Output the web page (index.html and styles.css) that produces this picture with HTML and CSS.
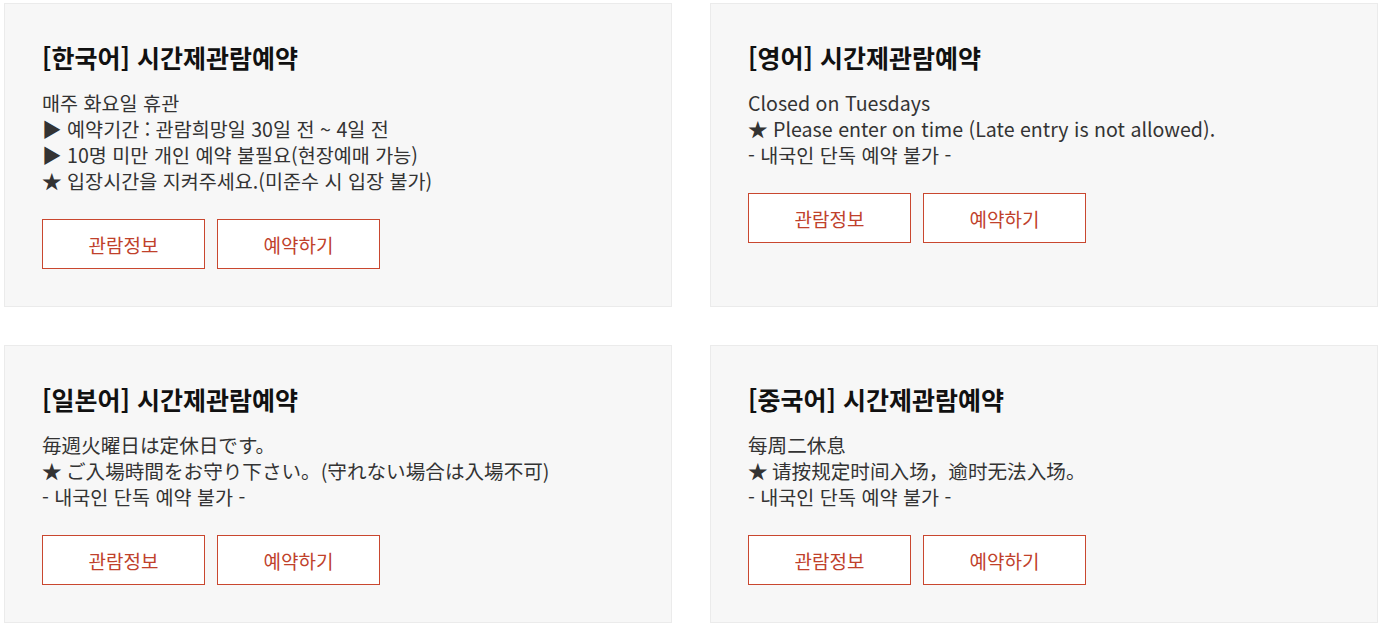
FILE: index.html
```html
<!DOCTYPE html>
<html lang="ko">
<head>
<meta charset="utf-8">
<title>시간제관람예약</title>
<link rel="stylesheet" href="styles.css">
</head>
<body>
<div class="grid">
  <section class="card">
    <h2 class="title">[한국어] 시간제관람예약</h2>
    <div class="desc">
      <p>매주 화요일 휴관</p>
      <p>▶ 예약기간 : 관람희망일 30일 전 ~ 4일 전</p>
      <p>▶ 10명 미만 개인 예약 불필요(현장예매 가능)</p>
      <p>★ 입장시간을 지켜주세요.(미준수 시 입장 불가)</p>
    </div>
    <div class="btns">
      <a class="btn" href="#">관람정보</a>
      <a class="btn" href="#">예약하기</a>
    </div>
  </section>
  <section class="card">
    <h2 class="title">[영어] 시간제관람예약</h2>
    <div class="desc">
      <p>Closed on Tuesdays</p>
      <p>★ Please enter on time (Late entry is not allowed).</p>
      <p>- 내국인 단독 예약 불가 -</p>
    </div>
    <div class="btns">
      <a class="btn" href="#">관람정보</a>
      <a class="btn" href="#">예약하기</a>
    </div>
  </section>
  <section class="card">
    <h2 class="title">[일본어] 시간제관람예약</h2>
    <div class="desc">
      <p lang="ja">毎週火曜日は定休日です。</p>
      <p lang="ja">★ ご入場時間をお守り下さい。(守れない場合は入場不可)</p>
      <p>- 내국인 단독 예약 불가 -</p>
    </div>
    <div class="btns">
      <a class="btn" href="#">관람정보</a>
      <a class="btn" href="#">예약하기</a>
    </div>
  </section>
  <section class="card">
    <h2 class="title">[중국어] 시간제관람예약</h2>
    <div class="desc">
      <p lang="zh">每周二休息</p>
      <p lang="zh">★ 请按规定时间入场，逾时无法入场。</p>
      <p>- 내국인 단독 예약 불가 -</p>
    </div>
    <div class="btns">
      <a class="btn" href="#">관람정보</a>
      <a class="btn" href="#">예약하기</a>
    </div>
  </section>
</div>
</body>
</html>
```
FILE: styles.css
```css
* { box-sizing: border-box; }
html, body { background: #fff; }
body {
  margin: 0;
  padding: 3px 9px 0 4px;
  font-family: "Noto Sans CJK KR", "Noto Sans", sans-serif;
  color: #333;
}
.grid {
  display: grid;
  grid-template-columns: 1fr 1fr;
  column-gap: 38px;
  row-gap: 38px;
}
.card {
  background: #f7f7f7;
  border: 1px solid #ebebeb;
  padding: 38px 37px 37px 37px;
}
.title {
  margin: 0;
  font-size: 25px;
  line-height: 30px;
  font-weight: 700;
  color: #111;
}
.desc {
  margin-top: 18px;
  font-size: 19.6px;
  line-height: 26px;
  color: #333;
}
.desc p { margin: 0; }
.desc p:lang(ja) { font-family: "Noto Sans CJK JP", "Noto Sans CJK KR", sans-serif; }
.desc p:lang(zh) { font-family: "Noto Sans CJK SC", "Noto Sans CJK KR", sans-serif; }
.btns {
  display: flex;
  gap: 12px;
  margin-top: 25px;
}
.btn {
  display: flex;
  align-items: center;
  justify-content: center;
  width: 163px;
  height: 50px;
  background: #fff;
  border: 1px solid #c9472f;
  color: #c0412b;
  font-size: 19px;
  text-decoration: none;
}
```
